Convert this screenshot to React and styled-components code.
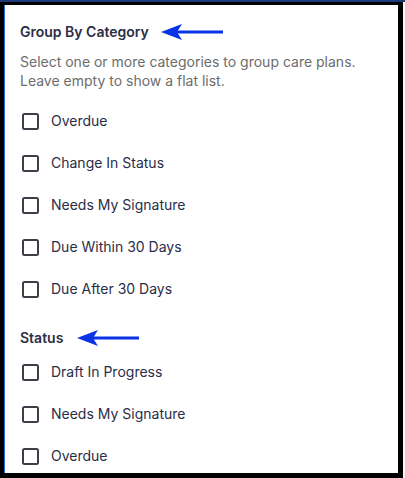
import React from "react";
import styled, { createGlobalStyle } from "styled-components";

const Global = createGlobalStyle`
  html, body { margin: 0; padding: 0; background: #f6f6f6; }
  body { font-family: Inter, "Noto Sans", "Liberation Sans", sans-serif; }
`;

const Frame = styled.div`
  width: 405px;
  height: 478px;
  box-sizing: border-box;
  padding-right: 2px;
  border-top: 2px solid #1c3b78;
  background: #f6f6f6;
`;

const Panel = styled.div`
  box-sizing: border-box;
  height: 100%;
  background: #ffffff;
  border-style: solid;
  border-color: #000;
  border-width: 3px 5px 5px 4px;
  box-shadow: inset 1px 0 0 #2f6fe0;
  padding: 18px 16px 0 16px;
  overflow: hidden;
`;

const TitleRow = styled.div`
  display: flex;
  align-items: center;
  gap: ${(p) => p.$gap}px;
  margin-top: ${(p) => p.$mt || 0}px;
  height: 18px;
`;

const Title = styled.h3`
  margin: 0;
  font-size: 14px;
  line-height: 18px;
  font-weight: 600;
  color: #2b2e46;
`;

const Description = styled.p`
  margin: 11px 0 0;
  font-size: 14px;
  line-height: 19px;
  color: #6d6d6d;
`;

const List = styled.div`
  display: flex;
  flex-direction: column;
  margin-top: ${(p) => p.$mt}px;
`;

const Option = styled.label`
  display: flex;
  align-items: center;
  gap: 12px;
  height: 42px;
  padding-left: 2px;
  cursor: pointer;
`;

const Box = styled.span`
  width: 17px;
  height: 17px;
  box-sizing: border-box;
  border: 2px solid #3b3f4a;
  border-radius: 2.5px;
  flex-shrink: 0;
  background: #fff;
`;

const Label = styled.span`
  font-size: 14px;
  line-height: 18px;
  font-weight: 400;
  color: #2a2d48;
`;

const Arrow = ({ width }) => (
  <svg width={width} height="18" viewBox={`0 0 ${width} 18`} aria-hidden="true">
    <polygon points="0,9 21,1 16,9 21,17" fill="#0a33e6" />
    <rect x="14" y="7.5" width={width - 14} height="3" fill="#0a33e6" />
  </svg>
);

const groupOptions = [
  "Overdue",
  "Change In Status",
  "Needs My Signature",
  "Due Within 30 Days",
  "Due After 30 Days",
];

const statusOptions = ["Draft In Progress", "Needs My Signature", "Overdue"];

export default function App() {
  return (
    <>
      <Global />
      <Frame>
        <Panel>
          <TitleRow $gap={12}>
            <Title>Group By Category</Title>
            <Arrow width={62} />
          </TitleRow>
          <Description>
            Select one or more categories to group care plans.
            <br />
            Leave empty to show a flat list.
          </Description>
          <List $mt={10}>
            {groupOptions.map((o) => (
              <Option key={o}>
                <Box />
                <Label>{o}</Label>
              </Option>
            ))}
          </List>
          <TitleRow $gap={14} $mt={19}>
            <Title>Status</Title>
            <Arrow width={62} />
          </TitleRow>
          <List $mt={4}>
            {statusOptions.map((o) => (
              <Option key={o}>
                <Box />
                <Label>{o}</Label>
              </Option>
            ))}
          </List>
        </Panel>
      </Frame>
    </>
  );
}
